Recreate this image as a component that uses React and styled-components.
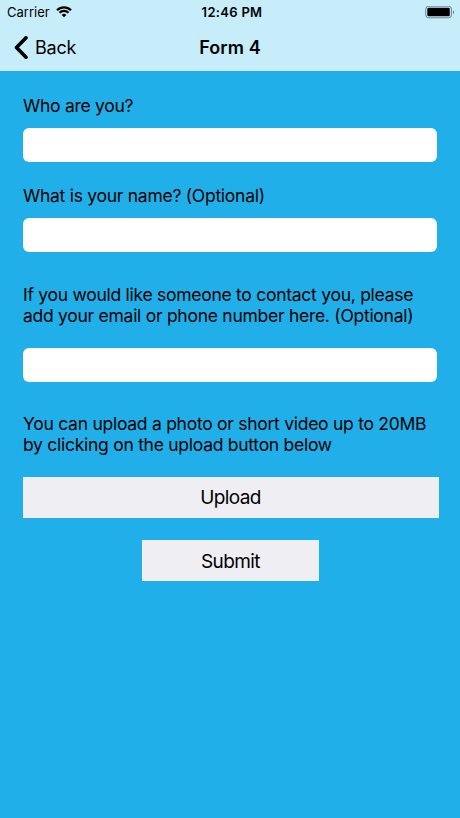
import React from "react";
import styled, { createGlobalStyle } from "styled-components";

const GlobalStyle = createGlobalStyle`
  * {
    box-sizing: border-box;
  }

  body {
    margin: 0;
    background: #20afe8;
    font-family: Inter, "Liberation Sans", sans-serif;
    color: #000;
  }
`

const Screen = styled.div`
  display: flex;
  flex-direction: column;
  min-height: 818px;
  background: #20afe8;
`

const Header = styled.header`
  height: 71px;
  background: #c7edfa;
`

const StatusBar = styled.div`
  display: grid;
  grid-template-columns: 1fr auto 1fr;
  align-items: center;
  height: 24px;
  padding: 0 5px 0 7px;
  font-size: 13px;
`

const Carrier = styled.div`
  display: flex;
  align-items: center;
  gap: 6px;
`

const Clock = styled.div`
  padding-left: 2px;
  font-weight: 600;
  letter-spacing: 0.3px;
`

const Battery = styled.div`
  display: flex;
  justify-content: flex-end;
`

const NavBar = styled.nav`
  display: grid;
  grid-template-columns: 1fr auto 1fr;
  align-items: center;
  height: 47px;
  padding: 0 14px;
`

const BackButton = styled.button`
  display: flex;
  align-items: center;
  gap: 6px;
  padding: 0;
  border: none;
  background: none;
  color: #000;
  font: inherit;
  font-size: 18px;
  letter-spacing: -0.2px;
`

const Title = styled.h1`
  margin: 0;
  font-size: 18px;
  font-weight: 600;
  letter-spacing: 0.1px;
`

const Form = styled.form`
  display: flex;
  flex-direction: column;
  padding: 24px 22px 0 23px;
`

const Label = styled.label`
  margin: ${({ $top }) => $top || 0}px 0 0;
  font-size: 17.5px;
  line-height: 21px;
  letter-spacing: -0.27px;
  white-space: nowrap;
`

const Input = styled.input`
  width: 414px;
  height: 34px;
  margin-top: ${({ $top }) => $top}px;
  padding: 0 8px;
  border: none;
  border-radius: 6px;
  background: #fff;
  font: inherit;
`

const Button = styled.button`
  align-self: center;
  width: ${({ $width }) => $width}px;
  height: 41px;
  margin-top: ${({ $top }) => $top}px;
  padding: 1px 0 0;
  border: none;
  background: #efeef3;
  color: #000;
  font: inherit;
  font-size: 19px;
  letter-spacing: -0.6px;
`

const WifiIcon = () => (
  <svg width="16" height="12" viewBox="0 0 16 12" fill="none" stroke="#000" strokeWidth="2.2">
    <path d="M1 4.2a10 10 0 0 1 14 0" />
    <path d="M3.5 6.8a6.4 6.4 0 0 1 9 0" />
    <path d="M8 11.3 5.6 8.9a3.4 3.4 0 0 1 4.8 0Z" fill="#000" stroke="none" />
  </svg>
)

const BatteryIcon = () => (
  <svg width="30" height="13" viewBox="0 0 30 13">
    <rect x="0.7" y="0.2" width="25.8" height="11.6" rx="3" fill="none" stroke="#68868f" />
    <rect x="2.3" y="1.8" width="22.5" height="8.5" rx="1.2" />
    <path d="M28 4.2a2.4 2.4 0 0 1 0 4Z" fill="#68868f" />
  </svg>
)

const BackIcon = () => (
  <svg width="15" height="24" viewBox="0 0 15 24" fill="none" stroke="#000" strokeWidth="3.6" strokeLinecap="round" strokeLinejoin="round">
    <path d="M12 1.8 2.5 11.5 12 21.2" />
  </svg>
)

const App = () => (
  <Screen>
    <GlobalStyle />
    <Header>
      <StatusBar>
        <Carrier>Carrier <WifiIcon /></Carrier>
        <Clock>12:46 PM</Clock>
        <Battery><BatteryIcon /></Battery>
      </StatusBar>
      <NavBar>
        <BackButton type="button"><BackIcon />Back</BackButton>
        <Title>Form 4</Title>
      </NavBar>
    </Header>
    <Form>
      <Label htmlFor="who">Who are you?</Label>
      <Input id="who" $top={12} />
      <Label htmlFor="name" $top={23}>What is your name? (Optional)</Label>
      <Input id="name" $top={12} />
      <Label htmlFor="contact" $top={32}>
        If you would like someone to contact you, please<br />
        add your email or phone number here. (Optional)
      </Label>
      <Input id="contact" $top={21.6} />
      <Label as="p" $top={31.8}>
        You can upload a photo or short video up to 20MB<br />
        by clicking on the upload button below
      </Label>
      <Button type="button" $width={416} $top={21.6}>Upload</Button>
      <Button type="button" $width={177} $top={22.4}>Submit</Button>
    </Form>
  </Screen>
);

export default App;
